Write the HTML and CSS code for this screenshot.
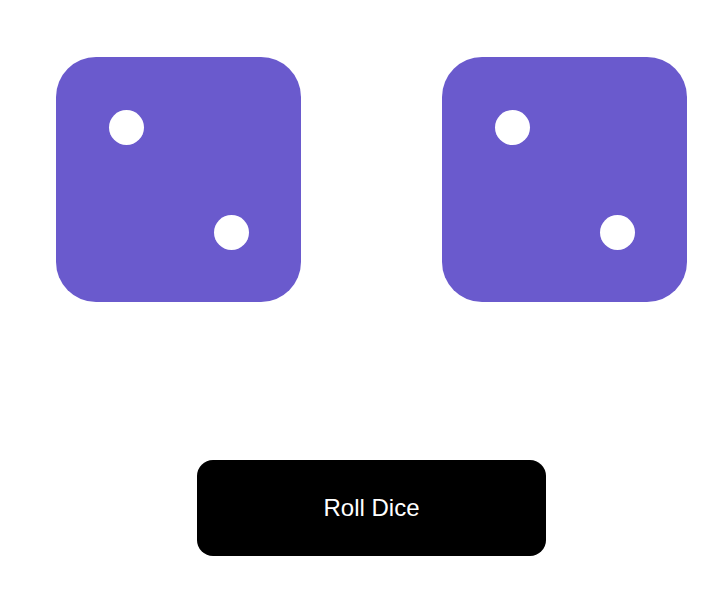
FILE: index.html
```html
<!DOCTYPE html>
<html lang="en">
<head>
<meta charset="utf-8">
<title>Roll Dice</title>
<link rel="stylesheet" href="styles.css">
</head>
<body>
<main class="app">
  <div class="dice-row">
    <div class="die">
      <span class="dot dot-tl"></span>
      <span class="dot dot-br"></span>
    </div>
    <div class="die">
      <span class="dot dot-tl"></span>
      <span class="dot dot-br"></span>
    </div>
  </div>
  <button class="roll-btn" type="button">Roll Dice</button>
</main>
</body>
</html>
```

FILE: styles.css
```css
html, body {
  margin: 0;
  padding: 0;
  background: #ffffff;
}

body {
  font-family: "Liberation Sans", Arial, sans-serif;
}

.app {
  box-sizing: border-box;
  width: 706px;
  padding-left: 37px;
  padding-top: 57px;
  display: flex;
  flex-direction: column;
  align-items: center;
}

.dice-row {
  display: flex;
  gap: 141px;
}

.die {
  width: 245px;
  height: 245px;
  background: #6a5acd;
  border-radius: 40px;
  display: grid;
  grid-template-columns: 52.5px 35px 70px 35px 52.5px;
  grid-template-rows: 52.5px 35px 70px 35px 52.5px;
}

.dot {
  width: 35px;
  height: 35px;
  border-radius: 50%;
  background: #ffffff;
}

.dot-tl {
  grid-column: 2;
  grid-row: 2;
}

.dot-br {
  grid-column: 4;
  grid-row: 4;
}

.roll-btn {
  margin-top: 158px;
  width: 349px;
  height: 96px;
  background: #000000;
  color: #ffffff;
  border: none;
  border-radius: 16px;
  font-family: "Liberation Sans", Arial, sans-serif;
  font-size: 24px;
  padding: 0;
  cursor: pointer;
}
```
